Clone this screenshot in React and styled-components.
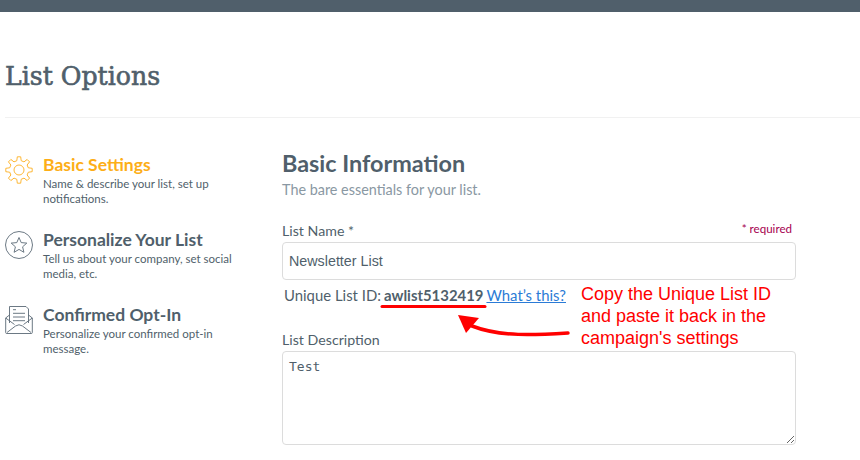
import React from 'react';
import styled, { createGlobalStyle } from 'styled-components';

const GlobalStyle = createGlobalStyle`
  html, body {
    margin: 0;
    padding: 0;
    background: #fff;
  }
  body {
    font-family: Lato, "Noto Sans", sans-serif;
    color: #505f6b;
    overflow: hidden;
  }
`;

const Page = styled.div`
  position: relative;
  width: 860px;
  height: 460px;
  overflow: hidden;
`;

const TopBar = styled.div`
  height: 12px;
  background-color: #505f6b;
`;

const Header = styled.header`
  height: 106px;
  margin-left: 5px;
  box-sizing: border-box;
  padding-top: 47px;
  border-bottom: 1px solid #f1f1f1;
`;

const Title = styled.h1`
  margin: 0;
  font-family: "DejaVu Serif", serif;
  font-size: 25.2px;
  line-height: 36px;
  font-weight: 400;
  -webkit-text-stroke: 0.6px #505f6b;
  color: #505f6b;
`;

const Columns = styled.div`
  display: flex;
  padding: 32px 0 0 5px;
`;

const Sidebar = styled.nav`
  width: 277px;
  flex: none;
  display: flex;
  flex-direction: column;
  gap: 24px;
  padding-top: 4px;
`;

const NavItem = styled.div`
  display: flex;
  gap: 10px;
  height: 51px;
`;

const NavIcon = styled.svg`
  width: 28px;
  height: 28px;
  flex: none;
  margin-top: 2px;
  fill: none;
  stroke: ${(p) => (p.$active ? '#fdb022' : '#5b6a76')};
  stroke-width: 0.9;
`;

const NavText = styled.div`
  width: 195px;
`;

const NavTitle = styled.div`
  font-size: 17.5px;
  line-height: 21px;
  font-weight: 700;
  color: ${(p) => (p.$active ? '#fdae17' : '#505f6b')};
`;

const NavDesc = styled.div`
  margin-top: 1px;
  font-size: 11.5px;
  line-height: 15px;
  color: #505f6b;
`;

const Main = styled.main`
  width: 514px;
`;

const SectionTitle = styled.h2`
  margin: 0;
  font-size: 23.4px;
  line-height: 26px;
  font-weight: 700;
  color: #505f6b;
`;

const SectionSub = styled.p`
  margin: 4px 0 0;
  font-size: 14.4px;
  line-height: 20px;
  color: #8a98a3;
`;

const LabelRow = styled.div`
  display: flex;
  justify-content: space-between;
  align-items: flex-start;
  height: 20px;
  padding-right: 4px;
  margin-top: ${(p) => p.$top}px;
  margin-bottom: 1px;
`;

const Label = styled.label`
  font-size: 14.2px;
  line-height: 20px;
  color: #505f6b;
`;

const Required = styled.span`
  font-size: 11.6px;
  line-height: 15px;
  color: #a6004f;
`;

const TextInput = styled.input`
  display: block;
  box-sizing: border-box;
  width: 514px;
  height: 38px;
  padding: 0 6px;
  border: 1px solid #dcdcdc;
  border-radius: 4px;
  outline: none;
  font-family: "Liberation Sans", Arial, sans-serif;
  font-size: 14.3px;
  color: #505f6b;
`;

const IdRow = styled.div`
  height: 30px;
  padding-left: 2px;
  display: flex;
  align-items: center;
  gap: 3px;
  font-size: 14.9px;
  color: #505f6b;
`;

const ListId = styled.strong`
  font-weight: 700;
`;

const HelpLink = styled.a`
  color: #2b7bd6;
  text-decoration: underline;
`;

const TextArea = styled.textarea`
  display: block;
  box-sizing: border-box;
  width: 514px;
  height: 94px;
  padding: 7px 6px;
  border: 1px solid #dcdcdc;
  border-radius: 4px;
  outline: none;
  font-family: "DejaVu Sans Mono", monospace;
  font-size: 13px;
  line-height: 16px;
  color: #505f6b;
`;

const Callout = styled.div`
  position: absolute;
  left: 581px;
  top: 283px;
  font-family: "Liberation Sans", Arial, sans-serif;
  font-size: 18px;
  line-height: 22px;
  color: #f00;
`;

const Markup = styled.svg`
  position: absolute;
  left: 0;
  top: 0;
  pointer-events: none;
`;

const gearTeeth = Array.from({ length: 8 }, (_, i) => i * 45);

const GearIcon = () => (
  <NavIcon $active viewBox="0 0 28 28">
    <circle cx="14" cy="14" r="5" />
    {gearTeeth.map((a) => (
      <path
        key={a}
        transform={`rotate(${a} 14 14)`}
        d="M11.8 4.7 L12.3 0.8 H15.7 L16.2 4.7 L19 5.9"
      />
    ))}
  </NavIcon>
);

const StarIcon = () => (
  <NavIcon viewBox="0 0 28 28">
    <circle cx="14" cy="14" r="13.5" />
    <path d="M14 6.5 L16.2 11.6 L21.8 12.1 L17.6 15.8 L18.9 21.3 L14 18.4 L9.1 21.3 L10.4 15.8 L6.2 12.1 L11.8 11.6 Z" />
  </NavIcon>
);

const MailIcon = () => (
  <NavIcon viewBox="0 0 28 28">
    <path d="M4.5 17 V0.5 H21 L23.5 3 V17" />
    <path d="M8 3.7 H11 M8 7.3 H20 M8 11 H20 M8 14.7 H20" />
    <path d="M4.5 9 L0.7 12 V26.5 Q0.7 27.5 1.7 27.5 H26.3 Q27.3 27.5 27.3 26.5 V12 L23.5 9" />
    <path d="M0.7 12 L9.5 18.5 M27.3 12 L18.5 18.5 M2 26.5 L10.5 20 Q14 17.5 17.5 20 L26 26.5" />
  </NavIcon>
);

const navItems = [
  { title: 'Basic Settings', desc: 'Name & describe your list, set up notifications.', Icon: GearIcon, active: true },
  { title: 'Personalize Your List', desc: 'Tell us about your company, set social media, etc.', Icon: StarIcon },
  { title: 'Confirmed Opt-In', desc: 'Personalize your confirmed opt-in message.', Icon: MailIcon },
];

const App = () => {
  return (
    <Page>
      <GlobalStyle />
      <TopBar />
      <Header>
        <Title>List Options</Title>
      </Header>
      <Columns>
        <Sidebar>
          {navItems.map(({ title, desc, Icon, active }) => (
            <NavItem key={title}>
              <Icon />
              <NavText>
                <NavTitle $active={active}>{title}</NavTitle>
                <NavDesc>{desc}</NavDesc>
              </NavText>
            </NavItem>
          ))}
        </Sidebar>
        <Main>
          <SectionTitle>Basic Information</SectionTitle>
          <SectionSub>The bare essentials for your list.</SectionSub>
          <LabelRow $top={21}>
            <Label>List Name *</Label>
            <Required>* required</Required>
          </LabelRow>
          <TextInput defaultValue="Newsletter List" />
          <IdRow>
            Unique List ID: <ListId>awlist5132419</ListId> <HelpLink href="#">What’s this?</HelpLink>
          </IdRow>
          <LabelRow $top={20}>
            <Label>List Description</Label>
          </LabelRow>
          <TextArea defaultValue="Test" />
        </Main>
      </Columns>
      <Markup width="860" height="460" viewBox="0 0 860 460">
        <path d="M382 306.5 H485" stroke="#f00" strokeWidth="3" strokeLinecap="round" fill="none" />
        <path d="M568 333 C535 335 500 337 472 326" stroke="#f00" strokeWidth="3.5" strokeLinecap="round" fill="none" />
        <path d="M458 315 L479 318 L466 333 Z" fill="#f00" />
      </Markup>
      <Callout>
        Copy the Unique List ID
        <br />
        and paste it back in the
        <br />
        campaign's settings
      </Callout>
    </Page>
  );
};

export default App;
